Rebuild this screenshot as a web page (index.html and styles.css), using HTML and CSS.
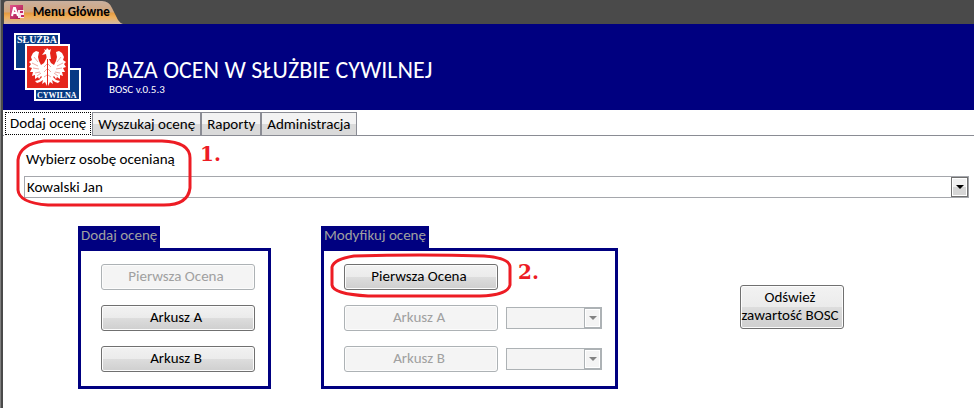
FILE: index.html
```html
<!DOCTYPE html>
<html lang="pl">
<head>
  <meta charset="UTF-8">
  <meta name="viewport" content="width=device-width, initial-scale=1.0">
  <title>Menu Główne</title>
  <link rel="stylesheet" href="styles.css">
</head>
<body>
  <div class="window">
    <div class="titlebar">
      <div class="doc-tab">
        <svg class="doc-shape" width="120" height="24" viewBox="0 0 120 24" aria-hidden="true">
          <defs>
            <linearGradient id="tabFill" x1="0" y1="0" x2="0" y2="1">
              <stop offset="0" stop-color="#c9b09f"/>
              <stop offset="0.48" stop-color="#d3a67c"/>
              <stop offset="0.52" stop-color="#e49a40"/>
              <stop offset="0.7" stop-color="#efaf5c"/>
              <stop offset="1" stop-color="#d2b9a4"/>
            </linearGradient>
          </defs>
          <path d="M1 24V4Q1 1 4 1H99Q106 1 109 8L115 20Q117 23 120 24Z" fill="url(#tabFill)"/>
        </svg>
        <svg class="doc-icon" width="16" height="16" viewBox="0 0 16 16" aria-hidden="true">
          <defs>
            <linearGradient id="iconFill" x1="0" y1="0" x2="1" y2="1">
              <stop offset="0" stop-color="#e4578c"/>
              <stop offset="1" stop-color="#a3134b"/>
            </linearGradient>
          </defs>
          <path d="M1 1H14V6H11V15H1Z" fill="url(#iconFill)"/>
          <path d="M9 6H15V14H9Z" fill="#fbe4ee"/>
          <path d="M11 8h3M12 12h3" stroke="#c42a68" stroke-width="2"/>
          <path d="M3 12L5 4H6L9 12M4 9H8" fill="none" stroke="#fff" stroke-width="2"/>
        </svg>
        <span>Menu Główne</span>
      </div>
    </div>

    <header>
      <svg class="logo" width="68" height="69" viewBox="0 0 68 69" role="img" aria-label="Służba Cywilna">
        <rect x="1" y="1" width="44" height="35" fill="#063a84" stroke="#fff" stroke-width="2"/>
        <text x="3" y="10" class="logo-text large">SŁUŻBA</text>
        <rect x="21" y="36" width="45" height="31" fill="#063a84" stroke="#fff" stroke-width="2"/>
        <rect x="12" y="12" width="43" height="44" fill="#e5251b" stroke="#fff" stroke-width="2"/>
        <defs>
          <g id="wing">
            <path d="M0 30V9L-3 15L-6 17L-8 13L-9 9L-8 4L-11 3L-14 5L-16 9L-15 12L-18 14L-16 16L-18 19L-15 20L-17 24L-14 24L-15 28L-12 27L-12 31L-9 29L-8 31L-6 28L-5 29L-8 32L-12 33L-10 35L-7 34L-4 32L-5 36L-2 34L0 38Z" fill="#fff"/>
            <path d="M-13 9L-9 14M-15 15L-9 18M-14 20L-8 21M-12 25L-7 24M-10 28L-6 25M0 16L-3 19M0 21L-3 24M0 27L-3 29" fill="none" stroke="#edaaa5"/>
          </g>
        </defs>
        <use href="#wing" transform="translate(33 15)"/>
        <use href="#wing" transform="translate(34 15) scale(-1 1)"/>
        <path d="M33 26L32 21L28 22L31 18L30 16L32 17L33 15L35 17L37 16L36 20L37 26Z" fill="#fff"/>
        <text x="23" y="65" class="logo-text">CYWILNA</text>
      </svg>
      <div class="heading">
        <h1>BAZA OCEN W SŁUŻBIE CYWILNEJ</h1>
        <p>BOSC v.0.5.3</p>
      </div>
    </header>

    <nav class="tabs">
      <button class="tab active">Dodaj ocenę</button>
      <button class="tab">Wyszukaj ocenę</button>
      <button class="tab">Raporty</button>
      <button class="tab">Administracja</button>
    </nav>

    <main>
      <div class="person">
        <label for="person">Wybierz osobę ocenianą</label>
        <div class="combo">
          <select id="person">
            <option>Kowalski Jan</option>
          </select>
        </div>
        <svg class="mark mark-person" width="176" height="70" viewBox="0 0 176 70" aria-hidden="true">
          <path d="M28 3H146Q174 4 174 20V50Q172 67 148 67H32Q3 65 2 52V22Q4 6 28 3Z"/>
        </svg>
        <span class="step step-person">1.</span>
      </div>

      <div class="panels">
        <section class="panel">
          <h2>Dodaj ocenę</h2>
          <div class="panel-body">
            <button class="btn" disabled>Pierwsza Ocena</button>
            <button class="btn">Arkusz A</button>
            <button class="btn">Arkusz B</button>
          </div>
        </section>

        <section class="panel">
          <h2>Modyfikuj ocenę</h2>
          <div class="panel-body">
            <div class="row marked">
              <button class="btn">Pierwsza Ocena</button>
              <svg class="mark mark-first" width="182" height="46" viewBox="0 0 182 46" aria-hidden="true">
                <path d="M24 3Q90 1 154 3Q180 5 180 14V32Q178 42 150 43H38Q3 41 2 32V14Q4 6 24 3Z"/>
              </svg>
              <span class="step step-first">2.</span>
            </div>
            <div class="row">
              <button class="btn" disabled>Arkusz A</button>
              <div class="combo small"><select aria-label="Arkusz A" disabled></select></div>
            </div>
            <div class="row">
              <button class="btn" disabled>Arkusz B</button>
              <div class="combo small"><select aria-label="Arkusz B" disabled></select></div>
            </div>
          </div>
        </section>

        <button class="btn refresh">Odśwież<br>zawartość BOSC</button>
      </div>
    </main>
  </div>
</body>
</html>
```

FILE: styles.css
```css
:root {
  --navy: #000080;
  --frame: #4a4a4a;
  --line: #8a8c94;
  --red: #ed1c24;
}

*, *::before, *::after {
  box-sizing: border-box;
}

body {
  margin: 0;
  border-left: 1px solid #808080;
  background: #fff;
  color: #000;
  font-family: Carlito, Lato, sans-serif;
  font-size: 15px;
  line-height: 18px;
}

button, select {
  font: inherit;
  color: inherit;
}

.window {
  min-height: 100vh;
  border-left: 2px solid var(--frame);
}

.titlebar {
  height: 24px;
  background: var(--frame);
}

.doc-tab {
  position: relative;
  display: flex;
  align-items: center;
  gap: 8px;
  width: 120px;
  height: 24px;
  padding-left: 6px;
  font-size: 13px;
  font-weight: bold;
}

.doc-tab span, .doc-icon {
  position: relative;
  white-space: nowrap;
}

.doc-icon {
  flex: none;
}

.doc-shape {
  position: absolute;
  top: 0;
  left: 0;
}

header {
  display: flex;
  gap: 24px;
  height: 86px;
  padding: 9px 11px;
  background: var(--navy);
  color: #fff;
}

.logo {
  flex: none;
}

.logo-text {
  font: bold 8px "Liberation Serif", serif;
  fill: #fff;
}

.logo-text.large {
  font-size: 10px;
}

.heading {
  padding-top: 24px;
}

h1 {
  margin: 0;
  font-size: 24px;
  font-weight: normal;
  line-height: 26px;
}

.heading p {
  margin: 0;
  padding-left: 3px;
  font-size: 11px;
  line-height: 14px;
}

.tabs {
  display: flex;
  align-items: flex-end;
  height: 26px;
  padding-left: 1px;
  border-bottom: 1px solid var(--line);
}

.tab {
  height: 23px;
  padding: 0 5px;
  border: 1px solid var(--line);
  border-bottom: 0;
  background: linear-gradient(#f3f3f3 50%, #dadada 50%);
  white-space: nowrap;
}

.tab.active {
  height: 25px;
  margin-bottom: -1px;
  padding: 0 6px 2px;
  border: 0;
  outline: 1px dotted #000;
  outline-offset: -2px;
  background: #fff;
}

main {
  padding: 14px 5px 18px 21px;
}

.person {
  position: relative;
}

.person label {
  display: block;
  padding: 0 2px;
  margin-bottom: 8px;
}

.combo {
  position: relative;
}

.combo select {
  display: block;
  width: 100%;
  height: 22px;
  padding: 0 2px;
  border: 1px solid #a5a7ac;
  border-radius: 0;
  background: #fff;
  appearance: none;
}

.combo::before {
  content: "";
  position: absolute;
  top: 1px;
  right: 1px;
  width: 17px;
  height: 20px;
  border: 1px solid #707070;
  background: linear-gradient(#f1f1f1 50%, #d6d6d6 50%);
  box-shadow: inset 0 0 0 1px #fff;
  pointer-events: none;
}

.combo::after {
  content: "";
  position: absolute;
  top: 9px;
  right: 5px;
  border: 4px solid transparent;
  border-top-color: #000;
  border-bottom: 0;
  pointer-events: none;
}

.combo.small {
  width: 96px;
}

.combo.small select {
  border-color: #adb2b5;
  background: #f4f4f4;
  opacity: 1;
}

.combo.small::before {
  border-color: #adb2b5;
  background: #f4f4f4;
}

.combo.small::after {
  border-top-color: #838383;
}

.panels {
  display: flex;
  align-items: flex-start;
  gap: 50px;
  padding: 28px 0 0 54px;
}

h2 {
  width: fit-content;
  margin: 0;
  padding: 0 3px 4px;
  background: var(--navy);
  color: #a0a0a0;
  font-size: 15px;
  font-weight: normal;
  line-height: 18px;
}

.panel-body {
  display: flex;
  flex-direction: column;
  gap: 15px;
  padding: 13px 13px 14px 20px;
  border: 3px solid var(--navy);
}

.row {
  display: flex;
  align-items: center;
  gap: 8px;
}

.marked {
  position: relative;
}

.btn {
  width: 154px;
  height: 26px;
  padding: 0 4px 2px 0;
  border: 1px solid #707070;
  border-radius: 3px;
  background: linear-gradient(#f2f2f2, #ebebeb 50%, #dddddd 50%, #cfcfcf);
  box-shadow: inset 0 0 0 1px #fcfcfc;
  line-height: 18px;
}

.btn:disabled {
  border-color: #adb2b5;
  background: #f4f4f4;
  color: #a0a0a0;
}

.refresh {
  width: 104px;
  height: 44px;
  margin: 59px 0 0 72px;
  white-space: nowrap;
}

/* red step markers */
.mark {
  position: absolute;
  fill: none;
  stroke: var(--red);
  stroke-width: 3px;
  pointer-events: none;
}

.mark-person {
  top: -12px;
  left: -8px;
}

.mark-first {
  top: -11px;
  left: -14px;
}

.step {
  position: absolute;
  color: var(--red);
  font: bold 20px/24px "DejaVu Serif", serif;
}

.step-person {
  top: -8px;
  left: 176px;
}

.step-first {
  top: -4px;
  left: 174px;
}
```
